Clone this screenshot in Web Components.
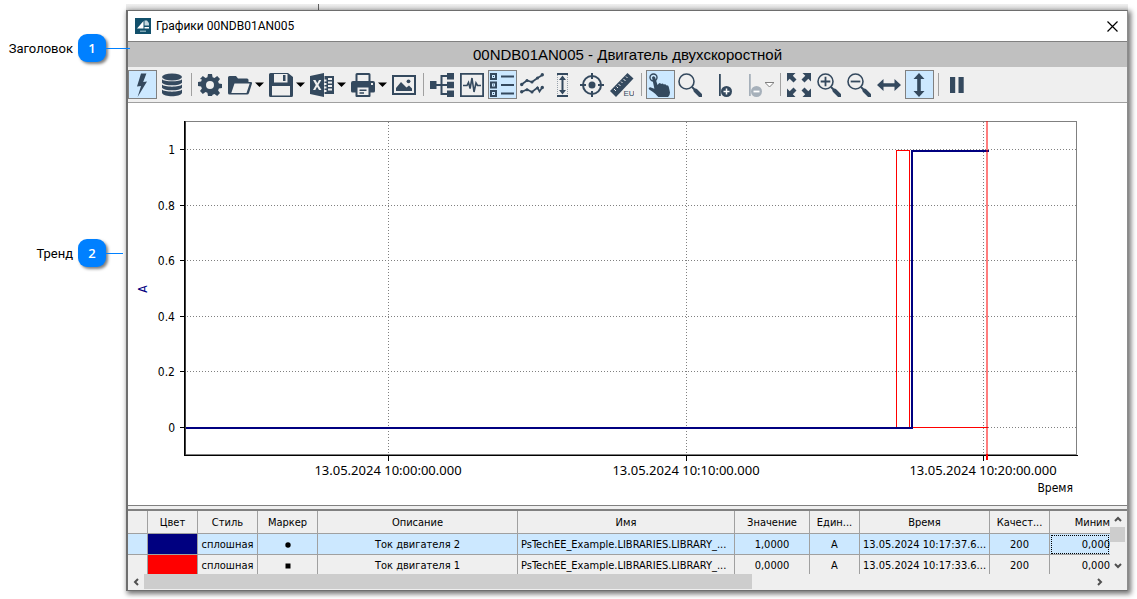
<!DOCTYPE html>
<html lang="ru">
<head>
<meta charset="utf-8">
<title>Графики 00NDB01AN005</title>
<style>
  html, body { margin: 0; background: #fff; }
  body { min-height: 100vh; display: flex; }
</style>
</head>
<body>
<help-page></help-page>
<script>
const UI_FONT = '"DejaVu Sans Condensed", "Noto Sans", sans-serif';

const define = (name, css, html, setup) => {
  const template = document.createElement('template');
  template.innerHTML = `<style>*{box-sizing:border-box}${css}</style>${html}`;
  customElements.define(name, class extends HTMLElement {
    constructor() {
      super();
      this.attachShadow({ mode: 'open' }).append(template.content.cloneNode(true));
    }
    connectedCallback() { if (setup) setup(this, this.shadowRoot); }
  });
};

/* Toolbar glyphs, 24 x 24 */
const ICONS = {
  bolt: '<path d="M11 .5h5.4L13.2 9l3.8-.6L7.6 24l3.4-11-4 .6z"/>',
  db: '<ellipse cx="12" cy="4" rx="10" ry="3.5"/><path d="M2 6.2c2 2.8 18 2.8 20 0v3.6c-2 3.4-18 3.4-20 0zM2 11.6c2 2.8 18 2.8 20 0v3.2c-2 3.4-18 3.4-20 0zM2 16.6c2 2.8 18 2.8 20 0v3.4c-2 4.4-18 4.4-20 0z"/>',
  gear: '<path fill-rule="evenodd" d="M10 1h4l.6 3.2 1.9.8 2.7-1.9 2.8 2.8-1.9 2.7.8 1.9 3.1.6v3.8l-3.1.6-.8 1.9 1.9 2.7-2.8 2.8-2.7-1.9-1.9.8L14 23h-4l-.6-3.2-1.9-.8-2.7 1.9L2 18.1l1.9-2.7-.8-1.9L0 12.900V9.100l3.100-.6.8-1.900L2 5.900l2.800-2.800L7.500 5l1.900-.8zM12 8a4 4 0 100 8 4 4 0 000-8z"/>',
  folder: '<path fill-rule="evenodd" d="M0 20V4.500Q0 3 1.500 3H8l2 2.500h9q1.500 0 1.500 1.500v2H23q1.500 0 1 1.500L21 20q-.5 1.500-2 1.500H1.500Q0 21.500 0 20zM6.500 10.500L3.300 20h15.200l3.200-9.500z"/>',
  save: '<path fill-rule="evenodd" d="M1.500 0H19l5 4v18.500q0 1.500-1.500 1.500h-21Q0 24 0 22.500v-21Q0 0 1.500 0zM5 1v8.500h13.500V1zM3 13v9.500h18V13z"/><path d="M14 2h2.500v6H14z"/>',
  excel: '<path fill-rule="evenodd" d="M0 3L14 0v24L0 21zM3 7l2.800 5L3 17h2.300l1.800-3.300L9 17h2.400l-3-5 2.900-5H9l-1.700 3.200L5.500 7z"/><path fill-rule="evenodd" d="M14.500 3H24v18h-9.500v-2h2v-2h-2v-1.500h2v-2h-2V12h2v-2h-2V8.500h2v-2h-2zM18 5v2h4V5zm0 3.500v2h4v-2zm0 3.500v2h4v-2zm0 3.500v2h4v-2z"/>',
  print: '<path fill-rule="evenodd" d="M4.500 8V1.500Q4.500 0 6 0h12q1.500 0 1.500 1.500V8H22q2 0 2 2v8q0 1.500-1.500 1.500h-3V23q0 1-1 1h-13q-1 0-1-1v-3.500h-3Q0 19.500 0 18v-8q0-2 2-2zM6.500 2v6h11V2zM6.500 14.500V22h11v-7.500zM20 10v2h2v-2z"/><path d="M8.500 16.500h7V18h-7zM8.500 19.200H13v1.500H8.500z"/>',
  image: '<path fill-rule="evenodd" d="M0 2h24v20H0zM2 4v16h20V4z"/><path d="M4 18v-3l5-6 5.500 5.500L17 12.500l3 3V18z"/><circle cx="16.500" cy="8.300" r="1.900"/>',
  tree: '<path d="M0 8h6.500v8H0zM17 0h7v6.500h-7zM17 8.700h7v6.600h-7zM17 17.500h7V24h-7z"/><path d="M6 12h12M18 3h-6.500v18H18" fill="none" stroke="currentColor" stroke-width="2"/>',
  pulse: '<path fill-rule="evenodd" d="M0 0h24v24H0zM1.800 1.800v20.400h20.400V1.800z"/><path d="M3 12.500h4l1.500-3 1.600 6L12 5l2 14 2-9 1.500 2.500H21" fill="none" stroke="currentColor" stroke-width="1.600"/>',
  list: '<path fill-rule="evenodd" d="M0 0h7v7H0zM2 2v3h3V2zM0 8.500h7v7H0zm2 2v3h3v-3zM0 17h7v7H0zm2 2v3h3v-3z"/><path d="M3 3h1v1H3zM3 11.500h1v1H3zM3 20h1v1H3zM11 2.500h13v2H11zM11 11h13v2H11zM11 19.500h13v2H11z"/>',
  lines: '<path d="M1.500 11.500L7 7.500l5 1.500 5.500-4L22.500 2M1.500 19L7 16.500l5 2.500 5.500-4.500 2 4 3-4.500" fill="none" stroke="currentColor" stroke-width="1.700"/><g><circle cx="1.700" cy="11.500" r="1.700"/><circle cx="7" cy="7.500" r="1.500"/><circle cx="12" cy="9" r="1.500"/><circle cx="17.500" cy="5" r="1.500"/><circle cx="22.300" cy="1.800" r="1.700"/><circle cx="1.700" cy="18.800" r="1.700"/><circle cx="7" cy="16.800" r="1.500"/><circle cx="12" cy="19" r="1.500"/><circle cx="17.500" cy="15" r="1.500"/><circle cx="22.300" cy="14.500" r="1.700"/></g>',
  range: '<path d="M7 0h11v2H7zM7 22h11v2H7zM11.500 5h2v14h-2z"/><path d="M12.500 2.500L16 7H9zM12.500 21.500L16 17H9z"/><path d="M7.500 2v20M17.500 2v20" fill="none" stroke="currentColor" stroke-width=".8" stroke-dasharray="1 1" opacity=".6"/>',
  target: '<g fill="none" stroke="currentColor" stroke-width="2"><circle cx="12" cy="12" r="9"/><path d="M12 0v6M12 18v6M0 12h6M18 12h6"/></g><circle cx="12" cy="12" r="3.500"/>',
  ruler: '<path d="M0 18L17.500 0l6 5.500L6 24z"/><path d="M4 16l2 2M6.500 13.500l1.500 1.500M8.500 11l2 2M11 8.500l1.500 1.500M13.500 6l2 2M16 3.500L17.500 5" stroke="#efefef" fill="none"/><text x="13.500" y="23" font-family="Liberation Sans" font-size="8">EU</text>',
  touch: '<circle cx="5.500" cy="4.500" r="3.500" fill="none" stroke="currentColor" stroke-width="1.400"/><path d="M4 4.500q1.500-2.500 3.200 0L9.500 12l1.300-1.600q1.400-.8 2.200.6 1.800-1.200 2.800.4 1.900-.8 2.700 1 2-.3 2.300 1.600l1.200 5.500q0 3-2.500 5H11q-2-1.500-3.500-3.500-3-2.500-6.300-4.500-1.400-1.800 1-2.200l4.200 1.500z"/>',
  zoom: '<circle cx="8.500" cy="8.500" r="7.500" fill="none" stroke="currentColor" stroke-width="1.600"/><path d="M14 14l3 3" stroke="currentColor" stroke-width="2"/><path d="M17.500 17.500l5 5" stroke="currentColor" stroke-width="4" stroke-linecap="round"/>',
  pin: '<path d="M11 1h1.800v22H11z"/><circle cx="18.500" cy="18.500" r="5.500"/>',
  expand: '<path d="M0 0h8.500L5.800 2.700 9.500 6.500l-3 3L2.700 5.800 0 8.500zM24 0v8.500l-2.700-2.700-3.800 3.700-3-3 3.800-3.800L15.500 0zM0 24v-8.500l2.700 2.700 3.800-3.700 3 3-3.700 3.800L8.500 24zM24 24h-8.500l2.700-2.700-3.700-3.800 3-3 3.800 3.700 2.700-2.700z"/>',
  hor: '<path d="M0 12l6.500-6v4.200h11V6l6.500 6-6.500 6v-4.200h-11V18z"/>',
  ver: '<path d="M12 0l5.500 6h-3.700v12h3.700L12 24l-5.500-6h3.700V6H6.500z"/>',
  pause: '<path d="M5 4h5.200v16H5zM13.500 4h5.200v16h-5.200z"/>'
};
ICONS.zoomIn = ICONS.zoom + '<path d="M3.700 8.500h9.600M8.500 3.700v9.600" stroke="currentColor" stroke-width="1.800"/>';
ICONS.zoomOut = ICONS.zoom + '<path d="M3.700 8.500h9.600" stroke="currentColor" stroke-width="1.800"/>';
ICONS.pinAdd = ICONS.pin + '<path d="M15.500 18.500h6M18.500 15.500v6" stroke="#fff" stroke-width="1.500"/>';
ICONS.pinRemove = ICONS.pin + '<path d="M15.500 18.500h6" stroke="#fff" stroke-width="1.800"/>';

define('tool-button', `
  :host { display: block; }
  button { display: flex; align-items: center; width: 29px; height: 29px; padding: 0 0 0 1px; border: 1px solid transparent;
    background: none; color: #34495e; }
  :host([pressed]) button { background: #cce8ff; border-color: #808080; }
  :host([menu]) button { width: 40px; }
  :host([off]) button { color: #a6b0ba; }
  .icon { width: 24px; height: 24px; flex: none; fill: currentColor; }
  .arrow { display: none; width: 9px; height: 5px; margin-left: 3px; flex: none; fill: #000; }
  :host([menu]) .arrow { display: block; }
  :host([off]) .arrow { fill: #fff; stroke: #808080; }
`, `<button type="button"><svg class="icon" viewBox="0 0 24 24"></svg><svg class="arrow" viewBox="0 0 9 5"><path d="M0 .5h9L4.500 5z"/></svg></button>`,
(host, root) => {
  root.querySelector('.icon').innerHTML = ICONS[host.getAttribute('icon')];
  const button = root.querySelector('button');
  button.setAttribute('aria-label', host.getAttribute('label'));
  button.disabled = host.hasAttribute('off');
  if (host.hasAttribute('pressed')) button.setAttribute('aria-pressed', 'true');
});

define('tool-separator', `:host { display: block; width: 1px; height: 23px; margin: 0 3px; background: #a0a0a0; }`, '');

define('tool-bar', `
  :host { display: flex; align-items: center; gap: 1px; height: 36px; background: #efefef; border-bottom: 1px solid #a0a0a0; overflow: hidden; }
`, `
  <tool-button icon="bolt" label="Оперативный режим" pressed></tool-button>
  <tool-button icon="db" label="Архив"></tool-button>
  <tool-separator></tool-separator>
  <tool-button icon="gear" label="Настройки"></tool-button>
  <tool-button icon="folder" label="Открыть" menu></tool-button>
  <tool-button icon="save" label="Сохранить" menu></tool-button>
  <tool-button icon="excel" label="Экспорт в Excel" menu></tool-button>
  <tool-button icon="print" label="Печать" menu></tool-button>
  <tool-button icon="image" label="Изображение"></tool-button>
  <tool-separator></tool-separator>
  <tool-button icon="tree" label="Дерево сигналов"></tool-button>
  <tool-button icon="pulse" label="Сигнал"></tool-button>
  <tool-button icon="list" label="Легенда" pressed></tool-button>
  <tool-button icon="lines" label="Линии"></tool-button>
  <tool-button icon="range" label="Диапазон"></tool-button>
  <tool-button icon="target" label="Прицел"></tool-button>
  <tool-button icon="ruler" label="Единицы измерения"></tool-button>
  <tool-separator></tool-separator>
  <tool-button icon="touch" label="Выбор" pressed></tool-button>
  <tool-button icon="zoom" label="Лупа"></tool-button>
  <tool-button icon="pinAdd" label="Добавить метку"></tool-button>
  <tool-button icon="pinRemove" label="Удалить метку" menu off></tool-button>
  <tool-separator></tool-separator>
  <tool-button icon="expand" label="Показать всё"></tool-button>
  <tool-button icon="zoomIn" label="Увеличить"></tool-button>
  <tool-button icon="zoomOut" label="Уменьшить"></tool-button>
  <tool-button icon="hor" label="По горизонтали"></tool-button>
  <tool-button icon="ver" label="По вертикали" pressed></tool-button>
  <tool-separator></tool-separator>
  <tool-button icon="pause" label="Пауза"></tool-button>
`);

/* Trend plot: redrawn from its data whenever its box changes */
define('trend-chart', `
  :host { display: block; flex: 1 1 300px; min-height: 300px; position: relative; background: #fff; overflow: hidden; }
  svg { position: absolute; inset: 0; width: 100%; height: 100%; font: 12px ${UI_FONT}; shape-rendering: crispEdges; }
  .time { font: 13px "Noto Sans", sans-serif; }
`, '<svg role="img" aria-label="Тренд"></svg>', (host, root) => {
  const svg = root.querySelector('svg');
  const START = -6.84, END = 23.13;           // minutes around 10:00
  const draw = () => {
    const left = 57, top = 18, right = host.clientWidth - 51, bottom = host.clientHeight - 50;
    const x = t => Math.round(left + (t - START) / (END - START) * (right - left));
    const y = v => Math.round(bottom - 28 - v * (bottom - top - 56));
    const box = (x0, y0, w, h, fill, extra = '') => `<rect x="${x0}" y="${y0}" width="${w}" height="${h}" fill="${fill}" ${extra}/>`;
    let out = box(left, top, right - left, 1, '#808080') + box(right, top, 1, bottom - top + 1, '#808080') + box(left, bottom - 1, right - left, 1, '#808080');
    for (const v of [0, .2, .4, .6, .8, 1]) {
      out += `<path d="M${left + 2} ${y(v) + .5}H${right}" stroke="#808080" stroke-dasharray="1 2"/>`;
      out += box(left - 5, y(v), 5, 1, '#000') + `<text x="${left - 10}" y="${y(v) + 5}" text-anchor="end">${v}</text>`;
    }
    for (const [t, label] of [[0, '13.05.2024 10:00:00.000'], [10, '13.05.2024 10:10:00.000'], [20, '13.05.2024 10:20:00.000']]) {
      out += `<path d="M${x(t) + .5} ${top + 1}V${bottom}" stroke="#808080" stroke-dasharray="1 2"/>`;
      out += box(x(t), bottom, 1, 6, '#000') + `<text class="time" x="${x(t)}" y="${bottom + 20}" text-anchor="middle">${label}</text>`;
    }
    const now = x(20.1), on = x(17.62), redOn = x(17.08), redOff = x(17.52);
    out += `<path d="M${redOn + .5} ${y(0)}V${y(1) + 1.5}H${redOff + .5}V${y(0) + .5}H${now + 2}" fill="none" stroke="#f00"/>`;
    out += `<path d="M${left} ${y(0) + 1}H${on}V${y(1) + 2}H${now + 3}" fill="none" stroke="#000080" stroke-width="2"/>`;
    out += box(left - 1, top, 1, bottom - top + 1, '#000') + box(left, top, 1, bottom - top + 1, '#404040') + box(left - 1, bottom, right - left + 3, 1, '#000');
    out += box(now, top, 2, bottom - top, '#f00', 'opacity=".5"') + box(now, bottom - 1, 2, 6, '#f00');
    out += `<text x="${right - 3}" y="${bottom + 37}" text-anchor="end">Время</text>`;
    out += `<text transform="translate(19 ${(top + bottom) / 2 + 1}) rotate(-90)" text-anchor="middle" fill="#000080">A</text>`;
    svg.innerHTML = out;
  };
  draw();
  new ResizeObserver(draw).observe(host);
});

define('signal-table', `
  :host { display: grid; grid-template-columns: minmax(0, 1fr) 17px; grid-template-rows: 63px 15px; background: #efefef;
    border-top: 2px solid #808080; font: 11px ${UI_FONT}; padding-bottom: 1px; }
  .clip { overflow: hidden; }
  table { width: 100%; table-layout: fixed; border-collapse: separate; border-spacing: 0; }
  th, td { font-weight: normal; padding: 0; text-align: center; white-space: nowrap; overflow: hidden;
    border-right: 1px solid #a0a0a0; border-bottom: 1px solid #a0a0a0; }
  th { height: 23px; } td { height: 21px; }
  th:last-child, td:last-child { border-right: 0; text-align: right; }
  td.name { text-align: left; padding-left: 3px; }
  tr.sel td { background: #cce8ff; }
  tr.sel td:last-child { outline: 1px dotted #000; outline-offset: -2px; }
  tr td.c1, tr.sel td.c1 { background: #000080; }
  tr td.c2 { background: #f00; }
  td svg { width: 6px; height: 6px; vertical-align: middle; }
  button { border: 0; padding: 0; background: none; display: flex; align-items: center; justify-content: center; }
  button svg { width: 8px; height: 8px; fill: none; stroke: #505050; stroke-width: 2; }
  .v { display: flex; flex-direction: column; }
  .v button { height: 16px; width: 15px; }
  .v i { height: 15px; width: 15px; background: #cdcdcd; margin-bottom: auto; }
  .h { display: flex; padding-right: 2px; }
  .h button { width: 16px; height: 15px; }
  .h i { flex: 0 0 62%; background: #cdcdcd; margin-right: auto; }
`, `
  <div class="clip"><table>
    <colgroup><col style="width:20px"><col style="width:50px"><col style="width:60px"><col style="width:60px"><col style="width:200px"><col><col style="width:75px"><col style="width:50px"><col style="width:130px"><col style="width:60px"><col style="width:60px"></colgroup>
    <thead><tr><th></th><th>Цвет</th><th>Стиль</th><th>Маркер</th><th>Описание</th><th>Имя</th><th>Значение</th><th>Един...</th><th>Время</th><th>Качест...</th><th>Миним</th></tr></thead>
    <tbody>
      <tr class="sel"><td></td><td class="c1"></td><td>сплошная</td><td><svg viewBox="0 0 6 6"><circle cx="3" cy="3" r="2.700"/></svg></td><td>Ток двигателя 2</td><td class="name">PsTechEE_Example.LIBRARIES.LIBRARY_...</td><td>1,0000</td><td>А</td><td>13.05.2024 10:17:37.6...</td><td>200</td><td>0,000</td></tr>
      <tr><td></td><td class="c2"></td><td>сплошная</td><td><svg viewBox="0 0 6 6"><path d="M.5 .5h5v5h-5z"/></svg></td><td>Ток двигателя 1</td><td class="name">PsTechEE_Example.LIBRARIES.LIBRARY_...</td><td>0,0000</td><td>А</td><td>13.05.2024 10:17:33.6...</td><td>200</td><td>0,000</td></tr>
    </tbody>
  </table></div>
  <div class="v"><button type="button" aria-label="Вверх"><svg viewBox="0 0 8 8"><path d="M1 6l3-3 3 3"/></svg></button><i></i><button type="button" aria-label="Вниз"><svg viewBox="0 0 8 8"><path d="M1 2l3 3 3-3"/></svg></button></div>
  <div class="h"><button type="button" aria-label="Влево"><svg viewBox="0 0 8 8"><path d="M6 1L3 4l3 3"/></svg></button><i></i><button type="button" aria-label="Вправо"><svg viewBox="0 0 8 8"><path d="M2 1l3 3-3 3"/></svg></button></div>
`);

define('app-window', `
  :host { display: flex; flex-direction: column; min-width: 0; background: #fff; border: 1px solid #6e6e6e; border-left-width: 2px; border-right-color: #8c8c8c;
    box-shadow: 2px 2px 5px 1px rgba(0,0,0,.55); }
  header { display: flex; align-items: center; gap: 5px; height: 30px; padding: 0 9px 0 7px; font: 12px Roboto, sans-serif; }
  header span { flex: 1; }
  .logo { width: 16px; height: 16px; }
  button { display: flex; border: 0; padding: 0; background: none; }
  button svg { width: 11px; height: 11px; }
  h1 { margin: 0; height: 26px; border-top: 1px solid #808080; background: #c0c0c0; font: 15px/26px "Liberation Sans", sans-serif; text-align: center; }
  .split { height: 4px; border-top: 1px solid #808080; background: #efefef; }
`, `
  <header>
    <svg class="logo" viewBox="0 0 16 16"><path fill="#12506b" d="M0 0h16v16H0z"/><path fill="#fff" d="M2 10.500L8.500 3v7.500zM9.500 9H14v1.500H9.500z"/><path fill="#c5d8df" d="M9.500 2.500H12q2 1.500 2 5H9.500z"/><path fill="#7fa6b5" d="M5 12.500h6V14H5z"/></svg>
    <span>Графики 00NDB01AN005</span>
    <button type="button" aria-label="Закрыть"><svg viewBox="0 0 11 11"><path d="M.5 .5l10 10M10.500 .5l-10 10" stroke="#000" stroke-width="1.200"/></svg></button>
  </header>
  <h1>00NDB01AN005 - Двигатель двухскоростной</h1>
  <tool-bar></tool-bar>
  <trend-chart></trend-chart>
  <div class="split"></div>
  <signal-table></signal-table>
`);

define('call-out', `
  :host { display: flex; align-items: center; width: max-content; font: 13px Roboto, sans-serif; color: #000; }
  .label { width: 73px; margin-right: 5px; text-align: right; }
  b { width: 28px; height: 28px; border-radius: 9px; background: #0080ff; color: #fff; font: 600 13px/28px "Open Sans", sans-serif; text-align: center;
    box-shadow: 2px 2px 3px rgba(0,0,0,.5); }
  .lead { width: 17px; height: 1px; background: #0080ff; }
  :host([long]) .lead { width: 24px; }
`, '<span class="label"><slot></slot></span><b></b><span class="lead"></span>',
(host, root) => { root.querySelector('b').textContent = host.getAttribute('number'); });

define('help-page', `
  :host { flex: 1; display: grid; grid-template-columns: 126px minmax(0, 1fr); padding: 4px 9px 8px 0; }
  aside { display: flex; flex-direction: column; gap: 177px; padding-top: 30px; z-index: 1; width: 126px; }
  main { display: grid; grid-template-rows: 6px minmax(0, 1fr); }
  .behind { background: linear-gradient(#f0f0f0, #dcdcdc); }
  .behind::after { content: ""; display: block; width: 1px; height: 6px; margin-left: 192px; background: #606060; }
`, `
  <aside><call-out number="1" long>Заголовок</call-out><call-out number="2">Тренд</call-out></aside>
  <main><div class="behind"></div><app-window></app-window></main>
`);
</script>
</body>
</html>
